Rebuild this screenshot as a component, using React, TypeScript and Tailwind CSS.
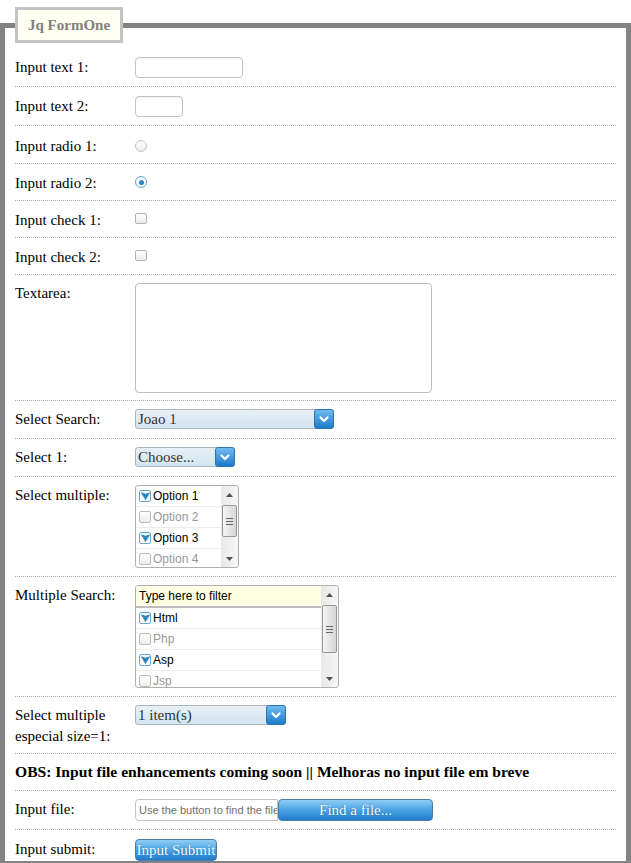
import React from 'react';

const Chevron = () => (
  <svg width="10" height="7" viewBox="0 0 10 7">
    <polyline points="1.5,1.5 5,5 8.5,1.5" fill="none" stroke="#fff" strokeWidth="2.2" strokeLinecap="round" strokeLinejoin="round" />
  </svg>
);

const FancySelect: React.FC<{ width: string; text: string }> = ({ width, text }) => (
  <div className={`flex h-[20px] ${width} rounded-[3px] border border-[#a9b5bc] bg-gradient-to-b from-[#e6f1f6] to-[#d3e5ee]`}>
    <span className="flex-1 pl-[2px] text-[15px] leading-[18px] text-[#333]">{text}</span>
    <span className="-my-px -mr-px flex w-[20px] items-center justify-center rounded-[3px] border border-[#2c75b0] bg-gradient-to-b from-[#6dbcf0] to-[#1a7acb]">
      <Chevron />
    </span>
  </div>
);

const CheckIcon: React.FC<{ checked?: boolean }> = ({ checked }) =>
  checked ? (
    <span className="flex h-[12px] w-[12px] shrink-0 items-center justify-center rounded-[2px] border border-[#5eaad6] bg-white">
      <svg width="9" height="8" viewBox="0 0 9 8">
        <path d="M0.5 0.8 L4.5 2.2 L8.5 0.8 L4.5 7.6 Z" fill="#2585c4" stroke="#2585c4" strokeWidth="0.8" strokeLinejoin="round" />
      </svg>
    </span>
  ) : (
    <span className="h-[12px] w-[12px] shrink-0 rounded-[2px] border border-[#bdbdbd] bg-gradient-to-b from-white to-[#ececec]" />
  );

const Scrollbar: React.FC<{ thumb: string }> = ({ thumb }) => (
  <div className="flex w-[17px] shrink-0 flex-col bg-gradient-to-r from-[#e9e9e9] to-[#f6f6f6]">
    <div className="flex h-[17px] items-center justify-center">
      <svg width="7" height="4" viewBox="0 0 7 4"><path d="M0 4 L3.5 0 L7 4 Z" fill="#505050" /></svg>
    </div>
    <div className="flex-1">
      <div className={`${thumb} mx-auto flex w-[15px] flex-col items-center justify-center gap-[2px] rounded-[2px] border border-[#979797] bg-gradient-to-r from-[#f4f4f4] to-[#d6d6d6]`}>
        <span className="h-px w-[7px] bg-[#666]" />
        <span className="h-px w-[7px] bg-[#666]" />
        <span className="h-px w-[7px] bg-[#666]" />
      </div>
    </div>
    <div className="flex h-[17px] items-center justify-center">
      <svg width="7" height="4" viewBox="0 0 7 4"><path d="M0 0 L3.5 4 L7 0 Z" fill="#505050" /></svg>
    </div>
  </div>
);

const ListItem: React.FC<{ label: string; checked?: boolean }> = ({ label, checked }) => (
  <div className="flex h-[21px] shrink-0 items-center gap-[2px] border-b border-[#ececec] pl-[3px] font-['Liberation_Sans',Arial,sans-serif] text-[12px]">
    <CheckIcon checked={checked} />
    <span className={checked ? 'text-black' : 'text-[#999]'}>{label}</span>
  </div>
);

const Row: React.FC<{ label: React.ReactNode; children?: React.ReactNode; className?: string; last?: boolean }> = ({
  label,
  children,
  className = 'py-2',
  last,
}) => (
  <div className={`flex ${className} ${last ? '' : 'border-b border-dotted border-[#aaaaaa]'}`}>
    <div className="w-[120px] shrink-0 text-[15px] leading-[21px] text-black">{label}</div>
    <div className="flex min-h-[20px] items-start">{children}</div>
  </div>
);

const BlueButton: React.FC<{ width: string; text: string }> = ({ width, text }) => (
  <button
    type="button"
    className={`h-[22px] ${width} rounded-[4px] border border-[#4a7fab] bg-gradient-to-b from-[#8fcdf5] via-[#4aa3e4] to-[#1f7ccc] text-[15px] leading-[18px] text-white [text-shadow:0_0_1px_#0a4f8a]`}
  >
    {text}
  </button>
);

const boxCheck = 'h-[11px] w-[12px] rounded-[2px] border border-[#b3b3b3] bg-gradient-to-b from-white to-[#ececec]';

export default function App() {
  return (
    <div className="bg-white pt-[7px] font-['Liberation_Serif','Times_New_Roman',serif]">
      <fieldset className="m-0 min-w-0 border-[5px] border-[#838383] px-[10px] pb-0 pt-[6px]">
        <legend className="border-[3px] border-[#c3c3c3] bg-[#fffff2] px-[10px] py-[6px] text-[15px] font-bold leading-[18px] text-[#808080]">
          Jq FormOne
        </legend>

        <Row label="Input text 1:">
          <input className="h-[21px] w-[108px] rounded-[4px] border border-[#c2c2c2] bg-white shadow-[inset_0_1px_1px_rgba(0,0,0,0.06)]" />
        </Row>
        <Row label="Input text 2:" className="pb-2 pt-[9px]">
          <input className="h-[21px] w-[48px] rounded-[4px] border border-[#c2c2c2] bg-white shadow-[inset_0_1px_1px_rgba(0,0,0,0.06)]" />
        </Row>
        <Row label="Input radio 1:" className="pb-[6px] pt-[10px]">
          <span className="mt-[4px] h-[12px] w-[12px] rounded-full border border-[#c4c4c4] bg-gradient-to-b from-white to-[#ededed]" />
        </Row>
        <Row label="Input radio 2:" className="pb-[6px] pt-[9px]">
          <span className="mt-[3px] flex h-[12px] w-[12px] items-center justify-center rounded-full border border-[#5aa7d5] bg-white">
            <span className="h-[5px] w-[5px] rounded-full bg-[#2b86c3]" />
          </span>
        </Row>
        <Row label="Input check 1:" className="pb-[6px] pt-[9px]">
          <span className={`mt-[3px] ${boxCheck}`} />
        </Row>
        <Row label="Input check 2:" className="pb-[6px] pt-[9px]">
          <span className={`mt-[3px] ${boxCheck}`} />
        </Row>
        <Row label="Textarea:" className="pb-[7px] pt-2">
          <textarea className="block h-[110px] w-[297px] resize-none rounded-[4px] border border-[#bdbdbd] bg-white" />
        </Row>
        <Row label="Select Search:">
          <FancySelect width="w-[199px]" text="Joao 1" />
        </Row>
        <Row label="Select 1:">
          <FancySelect width="w-[100px]" text="Choose..." />
        </Row>
        <Row label="Select multiple:">
          <div className="flex h-[83px] w-[104px] overflow-hidden rounded-[3px] border border-[#b0b0b0] bg-white">
            <div className="flex flex-1 flex-col overflow-hidden">
              <ListItem label="Option 1" checked />
              <ListItem label="Option 2" />
              <ListItem label="Option 3" checked />
              <ListItem label="Option 4" />
            </div>
            <Scrollbar thumb="mt-[2px] h-[32px]" />
          </div>
        </Row>
        <Row label="Multiple Search:">
          <div className="flex h-[103px] w-[204px] overflow-hidden rounded-[3px] border border-[#b0b0b0] bg-white">
            <div className="flex flex-1 flex-col overflow-hidden">
              <div className="h-[22px] shrink-0 border-b-2 border-[#bdbdbd] bg-[#ffffe4] pl-[3px] font-['Liberation_Sans',Arial,sans-serif] text-[12px] leading-[20px] text-black">
                Type here to filter
              </div>
              <ListItem label="Html" checked />
              <ListItem label="Php" />
              <ListItem label="Asp" checked />
              <ListItem label="Jsp" />
            </div>
            <Scrollbar thumb="mt-[2px] h-[48px]" />
          </div>
        </Row>
        <Row label={<>Select multiple<br />especial size=1:</>} className="pb-[6px] pt-2">
          <FancySelect width="w-[151px]" text="1 item(s)" />
        </Row>
        <div className="border-b border-dotted border-[#aaaaaa] py-2 text-[15.6px] font-bold leading-[20px] text-black">
          OBS: Input file enhancements coming soon || Melhoras no input file em breve
        </div>
        <Row label="Input file:">
          <div className="flex">
            <div className="h-[22px] w-[143px] overflow-hidden whitespace-nowrap rounded-l-[4px] border border-[#c2c2c2] bg-white pl-[3px] font-['Liberation_Sans',Arial,sans-serif] text-[11px] leading-[20px] text-[#6f6f6f]">
              Use the button to find the file
            </div>
            <BlueButton width="w-[155px]" text="Find a file..." />
          </div>
        </Row>
        <Row label="Input submit:" className="pb-0 pt-[9px]" last>
          <BlueButton width="w-[82px]" text="Input Submit" />
        </Row>
      </fieldset>
    </div>
  );
}
